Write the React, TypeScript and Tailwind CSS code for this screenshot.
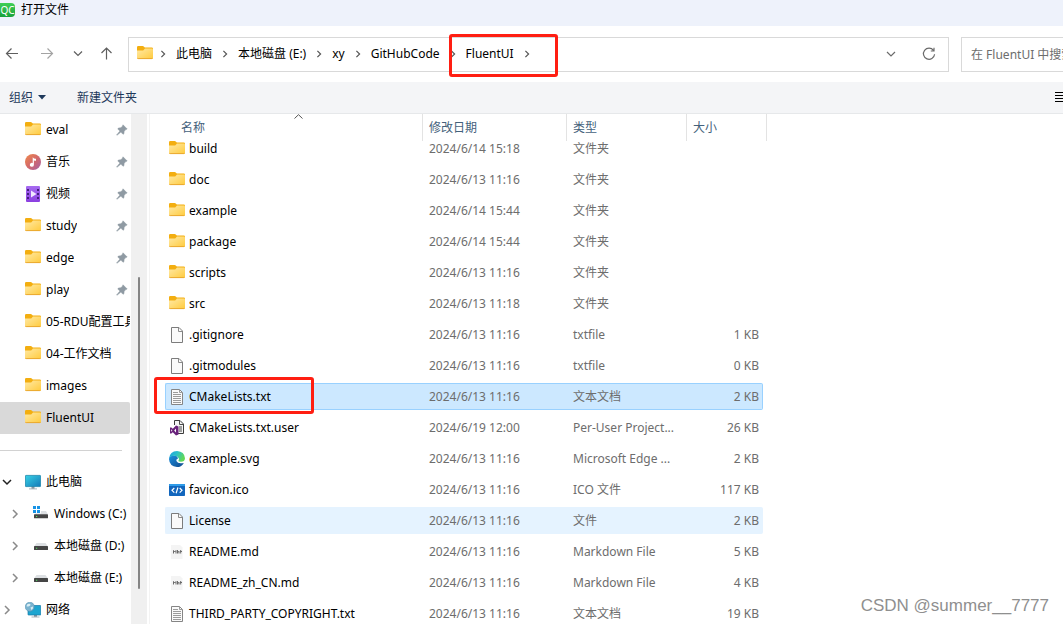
import React, { useLayoutEffect, useRef, useState } from "react";

const quickItems = [
  { icon: "folder", name: "eval", pinned: true },
  { icon: "music", name: "音乐", pinned: true },
  { icon: "video", name: "视频", pinned: true },
  { icon: "folder", name: "study", pinned: true },
  { icon: "folder", name: "edge", pinned: true },
  { icon: "folder", name: "play", pinned: true },
  { icon: "folder", name: "05-RDU配置工具", pinned: false },
  { icon: "folder", name: "04-工作文档", pinned: false },
  { icon: "folder", name: "images", pinned: false },
  { icon: "folder", name: "FluentUI", pinned: false },
];

const treeItems = [
  { icon: "pc", name: "此电脑", level: 0, open: true },
  { icon: "windrive", name: "Windows (C:)", level: 1, open: false },
  { icon: "drive", name: "本地磁盘 (D:)", level: 1, open: false },
  { icon: "drive", name: "本地磁盘 (E:)", level: 1, open: false },
  { icon: "network", name: "网络", level: 0, open: false },
];

const files = [
  { icon: "folder", name: "build", date: "2024/6/14 15:18", type: "文件夹", size: "" },
  { icon: "folder", name: "doc", date: "2024/6/13 11:16", type: "文件夹", size: "" },
  { icon: "folder", name: "example", date: "2024/6/14 15:44", type: "文件夹", size: "" },
  { icon: "folder", name: "package", date: "2024/6/14 15:44", type: "文件夹", size: "" },
  { icon: "folder", name: "scripts", date: "2024/6/13 11:16", type: "文件夹", size: "" },
  { icon: "folder", name: "src", date: "2024/6/13 11:18", type: "文件夹", size: "" },
  { icon: "file", name: ".gitignore", date: "2024/6/13 11:16", type: "txtfile", size: "1 KB" },
  { icon: "file", name: ".gitmodules", date: "2024/6/13 11:16", type: "txtfile", size: "0 KB" },
  { icon: "text", name: "CMakeLists.txt", date: "2024/6/13 11:16", type: "文本文档", size: "2 KB" },
  { icon: "vs", name: "CMakeLists.txt.user", date: "2024/6/19 12:00", type: "Per-User Project...", size: "26 KB" },
  { icon: "edge", name: "example.svg", date: "2024/6/13 11:16", type: "Microsoft Edge ...", size: "2 KB" },
  { icon: "code", name: "favicon.ico", date: "2024/6/13 11:16", type: "ICO 文件", size: "117 KB" },
  { icon: "file", name: "License", date: "2024/6/13 11:16", type: "文件", size: "2 KB" },
  { icon: "md", name: "README.md", date: "2024/6/13 11:16", type: "Markdown File", size: "5 KB" },
  { icon: "md", name: "README_zh_CN.md", date: "2024/6/13 11:16", type: "Markdown File", size: "4 KB" },
  { icon: "text", name: "THIRD_PARTY_COPYRIGHT.txt", date: "2024/6/13 11:16", type: "文本文档", size: "19 KB" },
];

const crumbs = ["此电脑", "本地磁盘 (E:)", "xy", "GitHubCode", "FluentUI"];

const Icon = ({ name }: { name: string }) => {
  const box = { width: 16, height: 16, viewBox: "0 0 16 16", className: "shrink-0" };
  switch (name) {
    case "folder":
      return (
        <svg {...box}>
          <defs>
            <linearGradient id="folder" x1="0" y1="0" x2="1" y2="1">
              <stop offset="0" stopColor="#ffe9a6" />
              <stop offset="1" stopColor="#ffcb3d" />
            </linearGradient>
          </defs>
          <path d="M0 1.200Q0 0 1.200 0H5.600Q6.300 0 6.800.6L7.800 1.600H14.800Q16 1.600 16 2.800V7H0Z" fill="#f3ae10" />
          <path d="M0 4.400H6.200L8 2.600H14.800Q16 2.600 16 3.800V11.800Q16 13 14.800 13H1.200Q0 13 0 11.800Z" fill="url(#folder)" />
          <path d="M.3 12.300Q.6 12.600 1.200 12.600H14.800Q15.400 12.600 15.700 12.300" fill="none" stroke="#e8a32a" strokeWidth=".9" />
        </svg>
      );
    case "music":
      return (
        <svg {...box}>
          <defs>
            <linearGradient id="music" x1="0" y1="0" x2="1" y2="1">
              <stop offset="0" stopColor="#f08a4b" />
              <stop offset=".5" stopColor="#d3696a" />
              <stop offset="1" stopColor="#a361a8" />
            </linearGradient>
          </defs>
          <circle cx="8" cy="8" r="8" fill="url(#music)" />
          <path d="M7.700 3.200Q9 5 11 4.800V6.700Q9.600 6.800 8.900 6.200V10.700A2 2 0 1 1 7.700 9Z" fill="#fff" />
        </svg>
      );
    case "video":
      return (
        <svg {...box}>
          <defs>
            <linearGradient id="video" x1="0" y1="0" x2="0" y2="1">
              <stop offset="0" stopColor="#a66bf0" />
              <stop offset="1" stopColor="#8b3fe0" />
            </linearGradient>
          </defs>
          <rect x="1" width="14" height="16" rx="1" fill="url(#video)" />
          <path d="M2 3h2v2H2zM2 7h2v2H2zM2 11h2v2H2zM12 3h2v2h-2zM12 7h2v2h-2zM12 11h2v2h-2z" fill="#45207d" />
          <path d="M6 4.500 11.500 8 6 11.500Z" fill="#f1e8ff" />
        </svg>
      );
    case "pc":
      return (
        <svg {...box}>
          <defs>
            <linearGradient id="screen" x1="0" y1="0" x2="1" y2="1">
              <stop offset="0" stopColor="#37d2e6" />
              <stop offset="1" stopColor="#1479b8" />
            </linearGradient>
          </defs>
          <path d="M6.500 12h3v3h-3z" fill="#8d98a1" />
          <path d="M4 14.400h8v1H4z" fill="#a9b3ba" />
          <rect x=".4" y="1.400" width="15.200" height="11.200" rx=".6" fill="url(#screen)" stroke="#1c86ac" strokeWidth=".8" />
        </svg>
      );
    case "windrive":
      return (
        <svg {...box}>
          <path d="M0 0h3v3H0zM4 0h3v3H4zM0 4h3v3H0zM4 4h3v3H4z" fill="#1793e6" />
          <path d="M8 5h5l2 3.500H1.500L2.500 7.500H8z" fill="#dde0e3" />
          <rect x="1" y="8.300" width="14" height="4" rx=".6" fill="#454545" />
          <path d="M3 10h1.200v1H3z" fill="#52e062" />
        </svg>
      );
    case "drive":
      return (
        <svg {...box}>
          <path d="M3.500 5h9L15 8.500H1z" fill="#dde0e3" />
          <rect x="1" y="8" width="14" height="4" rx=".6" fill="#454545" />
          <path d="M3 9.700h1.200v1H3z" fill="#52e062" />
        </svg>
      );
    case "network":
      return (
        <svg {...box}>
          <path d="M9 12h3v3H9z" fill="#8d98a1" />
          <path d="M6.500 14.500h8v1h-8z" fill="#a9b3ba" />
          <rect x="3" y="3.500" width="12.800" height="9.500" rx=".5" fill="#1da5d0" stroke="#1879a8" strokeWidth=".7" />
          <circle cx="4.800" cy="4.800" r="4.600" fill="#7ab3cf" stroke="#4b8dad" strokeWidth=".5" />
          <path d="M2 2.500Q4 1 5.500 2.200 5.700 3.700 4 4.200 2.500 5 1.600 4.200ZM5.500 5.500 8 4.500Q8.600 6.500 6.400 8Z" fill="#d9eef5" />
        </svg>
      );
    case "file":
      return (
        <svg {...box}>
          <path d="M2.500.5H10L13.500 4V15.500H2.500Z" fill="#fafafa" stroke="#7c7c7c" />
          <path d="M9.500.5V4.500H13.500" fill="none" stroke="#8c8c8c" />
        </svg>
      );
    case "text":
      return (
        <svg {...box}>
          <path d="M2.500.5H10.500L13.500 3.500V15.500H2.500Z" fill="#fafafa" stroke="#858585" />
          <path d="M10.500.5V3.500H13.500M4 3.500H9M4 5.500H12M4 7.500H12M4 9.500H12M4 11.500H12M4 13.500H12" fill="none" stroke="#9b9b9b" />
        </svg>
      );
    case "vs":
      return (
        <svg {...box}>
          <path d="M5.500 5V.5H11L14.500 4V13.500H9" fill="#f4f4f4" stroke="#3c3c3c" />
          <path d="M10.500.5V4.500H14.500M10 7h3M10 9h3M10 11h3" fill="none" stroke="#4a4a4a" />
          <path d="M7 5.500 9.500 6.500V14.500L7 15.500 3.800 12.300 2 13.800 1 13.200V7.800L2 7.200 3.800 8.700ZM7 8.500 5.200 10.500 7 12.500ZM2.200 9.300V11.700L3.400 10.500Z" fill="#68217a" fillRule="evenodd" />
        </svg>
      );
    case "edge":
      return (
        <svg {...box}>
          <defs>
            <linearGradient id="edgeTop" x1="0" y1="0" x2="1" y2=".4">
              <stop offset="0" stopColor="#1b9de2" />
              <stop offset=".5" stopColor="#2bc0c9" />
              <stop offset="1" stopColor="#62d957" />
            </linearGradient>
            <linearGradient id="edgeLow" x1="0" y1="0" x2="1" y2="1">
              <stop offset="0" stopColor="#1b8fe0" />
              <stop offset="1" stopColor="#114a8b" />
            </linearGradient>
          </defs>
          <path d="M0 8Q.3 4.500 5 4.500 8.500 4.600 9 7.500 6.800 8 7.400 10 8.800 12.900 13.500 12.200 15 11.800 14.600 12.400 12.300 16 8 16 .4 15.400 0 8Z" fill="url(#edgeLow)" />
          <path d="M0 7.600Q.9 0 8.100 0 15.400.5 16 7.200 15.800 10.700 12 10.800 9.300 10.700 9.300 9.800 10.300 8.900 9.900 7.500 8.800 4.900 5.300 4.700 1.500 4.800 0 7.600Z" fill="url(#edgeTop)" />
        </svg>
      );
    case "code":
      return (
        <svg {...box}>
          <rect y="2" width="16" height="12" rx=".8" fill="#1266bd" />
          <path d="M0 2.800Q0 2 .8 2H15.200Q16 2 16 2.800V4H0Z" fill="#2e9be8" />
          <path d="M5.300 6 3 8.300 5.300 10.600M10.700 6 13 8.300 10.700 10.600M8.900 5.500 7.100 11.200" fill="none" stroke="#fff" strokeWidth="1.200" />
        </svg>
      );
    default:
      return (
        <svg {...box}>
          <path d="M2 1H11L13.500 3.500V15H2Z" fill="#f4f4f4" />
          <path d="M4.500 9.500V6.500L5.700 8 7 6.500V9.500M8.500 6V9.500M8.500 7.700H10V9.500M11.700 6V9.500M10.700 7.500H13" fill="none" stroke="#6a6a6a" />
        </svg>
      );
  }
};

const Chevron = ({ className }: { className: string }) => (
  <svg width="10" height="10" viewBox="0 0 10 10" fill="none" stroke="currentColor" strokeWidth="1.500" className={className}>
    <path d="M3 1 7 5 3 9" />
  </svg>
);

const Pin = () => (
  <svg width="12" height="12" viewBox="0 0 12 12" className="ml-auto mr-0.5 shrink-0">
    <path d="M7 .8 11.200 5 9.800 5.600 8.200 7.300 7.900 9.800 7 10.300 4.900 8.100 1 11.300.6 11 3.900 7.100 1.800 5 2.300 4.100 4.800 3.800 6.400 2.200Z" fill="#8f9aa3" stroke="#8f9aa3" strokeWidth=".5" />
  </svg>
);

const rowStyle = (index: number, selected: number) => {
  if (index === selected) return "bg-[#cce8ff] border-[#99d1ff]";
  if (index === 12) return "bg-[#e5f3ff] border-[#e5f3ff]";
  return "border-transparent";
};

export default function App() {
  const listRef = useRef<HTMLDivElement>(null);
  const [selected, setSelected] = useState(8);

  // the list opens slightly scrolled under its header
  useLayoutEffect(() => {
    if (listRef.current) listRef.current.scrollTop = 8;
  }, []);

  return (
    <div className="relative flex h-screen flex-col overflow-hidden bg-white font-['Noto_Sans','Noto_Sans_CJK_SC',sans-serif] text-xs leading-4 text-black">
      {/* title bar */}
      <header className="flex h-[26px] shrink-0 items-start bg-[#eef2fb] pt-[2px]">
        <span className="mt-px flex h-[14px] w-[15px] items-center justify-center rounded-r-sm bg-linear-to-b from-[#3fcf55] to-[#17a13a] font-['Noto_Sans',sans-serif] text-[10px] text-white">
          QC
        </span>
        <h1 className="ml-1.5">打开文件</h1>
      </header>

      {/* navigation */}
      <div className="flex h-14 shrink-0 items-center">
        <nav className="flex shrink-0 items-center text-[#5f5f5f]">
          <button aria-label="后退" className="flex w-6 justify-center">
            <svg width="14" height="14" viewBox="0 0 14 14" fill="none" stroke="currentColor" strokeWidth="1.200"><path d="M13 6.500H1.500M6.500 1.500 1.500 6.500 6.500 11.500" /></svg>
          </button>
          <button aria-label="前进" className="flex w-[46px] justify-center text-[#a3a3a3]">
            <svg width="14" height="14" viewBox="0 0 14 14" fill="none" stroke="currentColor" strokeWidth="1.200"><path d="M1 6.500H12.500M7.500 1.500 12.500 6.500 7.500 11.500" /></svg>
          </button>
          <button aria-label="最近浏览的位置" className="flex w-4 justify-center">
            <svg width="10" height="10" viewBox="0 0 10 10" fill="none" stroke="currentColor" strokeWidth="1.200"><path d="M1 2.500 5 6.500 9 2.500" /></svg>
          </button>
          <button aria-label="向上" className="flex w-[42px] justify-center">
            <svg width="14" height="14" viewBox="0 0 14 14" fill="none" stroke="currentColor" strokeWidth="1.200"><path d="M6.500 12.500V1M1.500 6 6.500 1 11.500 6" /></svg>
          </button>
        </nav>

        <div className="flex h-[35px] min-w-0 flex-1 items-center border border-[#d9d9d9] pl-2">
          <Icon name="folder" />
          <Chevron className="mx-1.5 size-2 shrink-0 text-[#555]" />
          {crumbs.map((crumb, index) => (
            <span key={crumb} className="relative flex shrink-0 items-center">
              <button className={index === 0 ? "pl-[3px]" : ""}>{crumb}</button>
              <Chevron className="mx-[9px] size-2 text-[#555]" />
              {index === crumbs.length - 1 && (
                <span className="pointer-events-none absolute -bottom-[15px] -left-[17px] -right-[18px] -top-3 rounded-[3px] border-[3px] border-[#ff1e12]" />
              )}
            </span>
          ))}
          <button aria-label="以前的位置" className="ml-auto text-[#6b6b6b]">
            <svg width="10" height="10" viewBox="0 0 10 10" fill="none" stroke="currentColor" strokeWidth="1.200"><path d="M1 3 5 7 9 3" /></svg>
          </button>
          <button aria-label="刷新" className="ml-[26px] mr-[12px] text-[#6b6b6b]">
            <svg width="14" height="14" viewBox="0 0 14 14" fill="none" stroke="currentColor" strokeWidth="1.200"><path d="M11.500 3.300A5.600 5.600 0 1 0 12.600 7.300M12 .8V4H8.800" /></svg>
          </button>
        </div>
        <input
          type="text"
          aria-label="搜索"
          placeholder="在 FluentUI 中搜索"
          className="ml-3 h-[35px] w-[102px] shrink-0 border border-r-0 border-[#d9d9d9] pl-[9px] outline-none placeholder:text-[#6d6d6d]"
        />
      </div>

      {/* toolbar */}
      <div className="flex h-8 shrink-0 items-center border-b border-[#e6e8ea] bg-[#f4f5f7] pl-[9px] text-[#1e395b]">
        <button className="flex items-center gap-[5px]">
          组织
          <svg width="8" height="5" viewBox="0 0 8 5"><path d="M0 0H8L4 4.500Z" fill="currentColor" /></svg>
        </button>
        <button className="ml-[31px]">新建文件夹</button>
        <button aria-label="更改视图" className="ml-auto text-black">
          <svg width="8" height="12" viewBox="0 0 8 12" stroke="currentColor"><path d="M0 .5H8M0 3.500H8M0 6.500H8M0 9.500H8" /></svg>
        </button>
      </div>

      <div className="flex min-h-0 flex-1">
        {/* folder tree */}
        <aside className="w-[131px] shrink-0 overflow-hidden">
          <ul>
            {quickItems.map((item, index) => (
              <li key={item.name} className={`mr-px flex h-8 items-center gap-[5px] rounded-r-xs pl-[25px] ${index === 9 ? "bg-[#d9d9d9]" : ""}`}>
                <Icon name={item.icon} />
                <span className="overflow-hidden whitespace-nowrap">{item.name}</span>
                {item.pinned && <Pin />}
              </li>
            ))}
          </ul>
          <div className="flex h-8 items-center pr-[9px]">
            <hr className="w-full border-[#d2d2d2]" />
          </div>
          <ul>
            {treeItems.map((item) => (
              <li key={item.name} className={`flex h-8 items-center gap-[5px] ${item.level ? "pl-[10px]" : "pl-[2px]"}`}>
                <Chevron className={item.open ? "mr-2 rotate-90 text-[#222]" : "mr-2 text-[#8a8a8a]"} />
                <Icon name={item.icon} />
                <span className="whitespace-nowrap">{item.name}</span>
              </li>
            ))}
          </ul>
        </aside>
        <div className="flex w-4 shrink-0 justify-center bg-[#f0f0f0] pb-[35px] pt-[163px]">
          <div className="w-[2px] rounded-full bg-[#858585]" />
        </div>

        {/* file list */}
        <main ref={listRef} className="ml-[2px] min-w-0 flex-1 overflow-hidden border-l border-[#f3f3f3] pl-[15px]">
          <table className="w-[602px] table-fixed border-separate border-spacing-0 text-left">
            <thead className="sticky top-0 z-10 bg-white text-[#44617b]">
              <tr className="h-[27px]">
                <th className="relative w-[258px] border-r border-[#e3e3e3] p-0 pl-4 font-normal">
                  名称
                  <svg width="9" height="5" viewBox="0 0 9 5" fill="none" stroke="#555" className="absolute left-1/2 top-0"><path d="M.5 4.500 4.500.7 8.500 4.500" /></svg>
                </th>
                <th className="w-[144px] border-r border-[#e3e3e3] p-0 pl-1.5 font-normal">修改日期</th>
                <th className="w-[120px] border-r border-[#e3e3e3] p-0 pl-1.5 font-normal">类型</th>
                <th className="w-[80px] border-r border-[#e3e3e3] p-0 pl-1.5 font-normal">大小</th>
              </tr>
            </thead>
            <tbody className="text-[#6d6d6d]">
              {files.map((file, index) => {
                const look = rowStyle(index, selected);
                return (
                  <tr key={file.name} onClick={() => setSelected(index)}>
                    <td className="p-0 py-[2px]">
                      <div className={`relative flex h-[27px] items-center gap-1 rounded-l-xs border border-r-0 pl-[3px] text-black ${look}`}>
                        <Icon name={file.icon} />
                        {file.name}
                        {index === 8 && (
                          <span className="pointer-events-none absolute -bottom-[5px] -left-[12px] -top-[7px] w-[160px] rounded-[3px] border-[3px] border-[#ff1e12]" />
                        )}
                      </div>
                    </td>
                    <td className="p-0 py-[2px]">
                      <div className={`flex h-[27px] items-center border-y pl-1.5 ${look}`}>{file.date}</div>
                    </td>
                    <td className="p-0 py-[2px]">
                      <div className={`flex h-[27px] items-center whitespace-nowrap border-y pl-1.5 ${look}`}>{file.type}</div>
                    </td>
                    <td className="p-0 py-[2px]">
                      <div className={`mr-1 flex h-[27px] items-center justify-end rounded-r-xs border border-l-0 pr-[3px] ${look}`}>{file.size}</div>
                    </td>
                  </tr>
                );
              })}
            </tbody>
          </table>
        </main>
      </div>

      <p className="pointer-events-none absolute bottom-2 right-[14px] font-['Liberation_Sans',sans-serif] text-[17px] leading-5 text-[#8f8f8f]">
        CSDN @summer__7777
      </p>
    </div>
  );
}
